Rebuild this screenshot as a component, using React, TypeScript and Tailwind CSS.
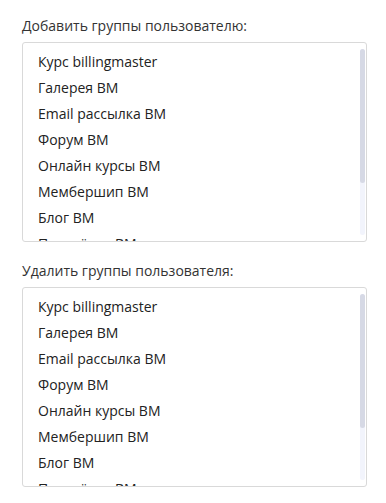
import React from "react";

const groups = [
  "Курс billingmaster",
  "Галерея BM",
  "Email рассылка BM",
  "Форум BM",
  "Онлайн курсы BM",
  "Мембершип BM",
  "Блог BM",
  "Партнёрка BM",
  "Поддержка BM",
];

// Список групп со своим скроллбаром (рисуем вручную)
const GroupList = ({ label }: { label: string }) => (
  <div className="flex flex-col">
    <div className="h-5 text-sm leading-5 text-[#333]">{label}</div>
    <div className="relative mt-1.5 h-[200px] overflow-hidden rounded-[3px] border border-[#d9d9d9] bg-white">
      <div className="pt-[6px] pr-2">
        {groups.map((g, idx) => (
          <div key={idx} className="h-[26px] pl-[15px] text-sm leading-[26px] text-[#222] whitespace-nowrap">
            {g}
          </div>
        ))}
      </div>
      <div className="absolute right-px top-[6px] bottom-[6px] w-[5px] rounded-full bg-[#f2f4fc]">
        <div className="h-[134px] w-full rounded-full bg-[#d6d9e5]" />
      </div>
    </div>
  </div>
);

export default function App() {
  return (
    <div className="min-h-screen bg-white px-[22px] pt-4 font-['Open_Sans',sans-serif]">
      <div className="w-[345px] flex flex-col gap-[19px]">
        <GroupList label="Добавить группы пользователю:" />
        <GroupList label="Удалить группы пользователя:" />
      </div>
    </div>
  );
}
